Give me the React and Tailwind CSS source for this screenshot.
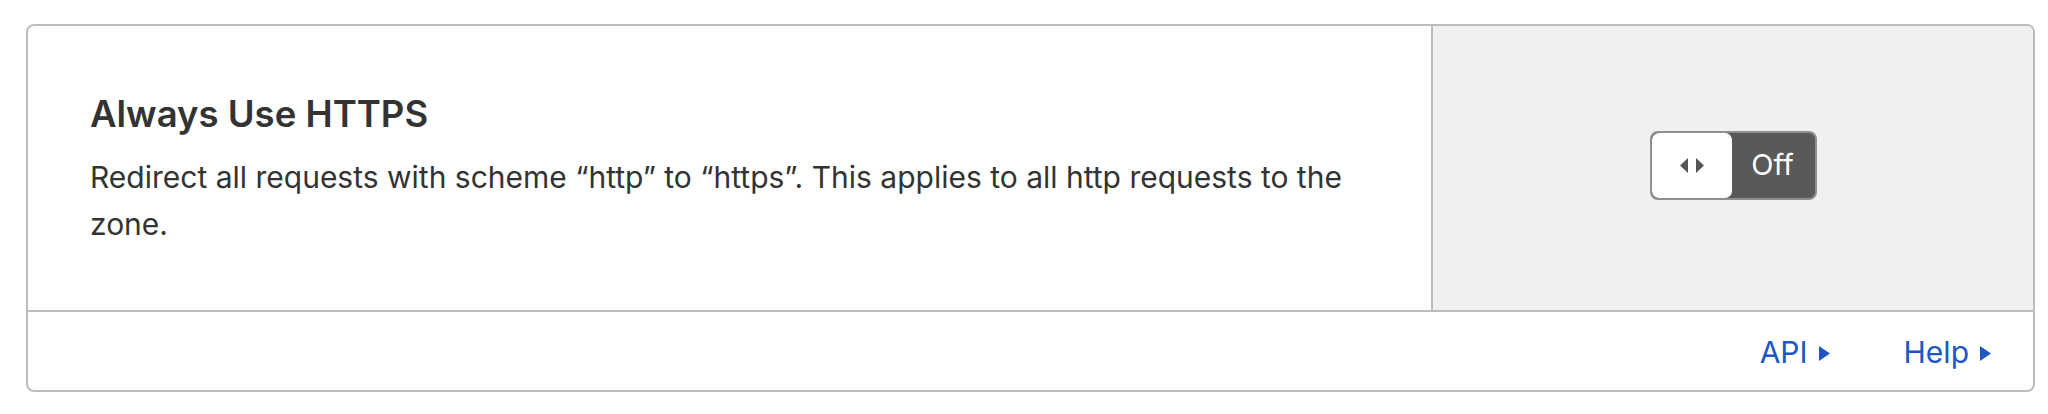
import React from "react";

function Caret() {
  return (
    <svg width="11" height="15" viewBox="0 0 11 15" className="ml-[11px] mt-[2px]">
      <path d="M0 0 L11 7.5 L0 15 Z" fill="currentColor" />
    </svg>
  );
}

export default function App() {
  return (
    <div
      className="w-[2048px] h-[414px] bg-white pt-[24px] pl-[26px] text-[#333333]"
      style={{ fontFamily: "Inter, 'Liberation Sans', sans-serif" }}
    >
      <div className="w-[2009px] h-[368px] border-2 border-[#bdbdbd] rounded-[8px] overflow-hidden flex flex-col">
        <div className="flex h-[286px] border-b-2 border-[#bdbdbd]">
          <div className="w-[1405px] border-r-2 border-[#bdbdbd] pl-[62px] pr-[60px] pt-[66px]">
            <h2 className="text-[36.5px] leading-[44px] font-semibold">Always Use HTTPS</h2>
            <p className="mt-[18px] text-[30px] leading-[47px]">
              Redirect all requests with scheme “http” to “https”. This applies to all http requests to the zone.
            </p>
          </div>
          <div className="flex-1 bg-[#f0f0f0] flex items-center justify-center pl-[1px] pb-[6px]">
            <div className="w-[167px] h-[69px] rounded-[8px] border-2 border-[#8f8f8f] bg-[#595959] flex overflow-hidden">
              <div className="w-[80px] h-full bg-white rounded-[7px] flex items-center justify-center gap-[8px]">
                <svg width="8" height="15" viewBox="0 0 8 15">
                  <path d="M8 0 L0 7.5 L8 15 Z" fill="#555555" />
                </svg>
                <svg width="8" height="15" viewBox="0 0 8 15">
                  <path d="M0 0 L8 7.5 L0 15 Z" fill="#555555" />
                </svg>
              </div>
              <div className="flex-1 flex items-center justify-center text-white text-[29px] pr-[2px]">Off</div>
            </div>
          </div>
        </div>
        <div className="flex-1 flex items-center justify-end pr-[42px] pt-[3px] text-[30px] text-[#2056c4]">
          <a className="flex items-center">API<Caret /></a>
          <a className="flex items-center ml-[74px]">Help<Caret /></a>
        </div>
      </div>
    </div>
  );
}
